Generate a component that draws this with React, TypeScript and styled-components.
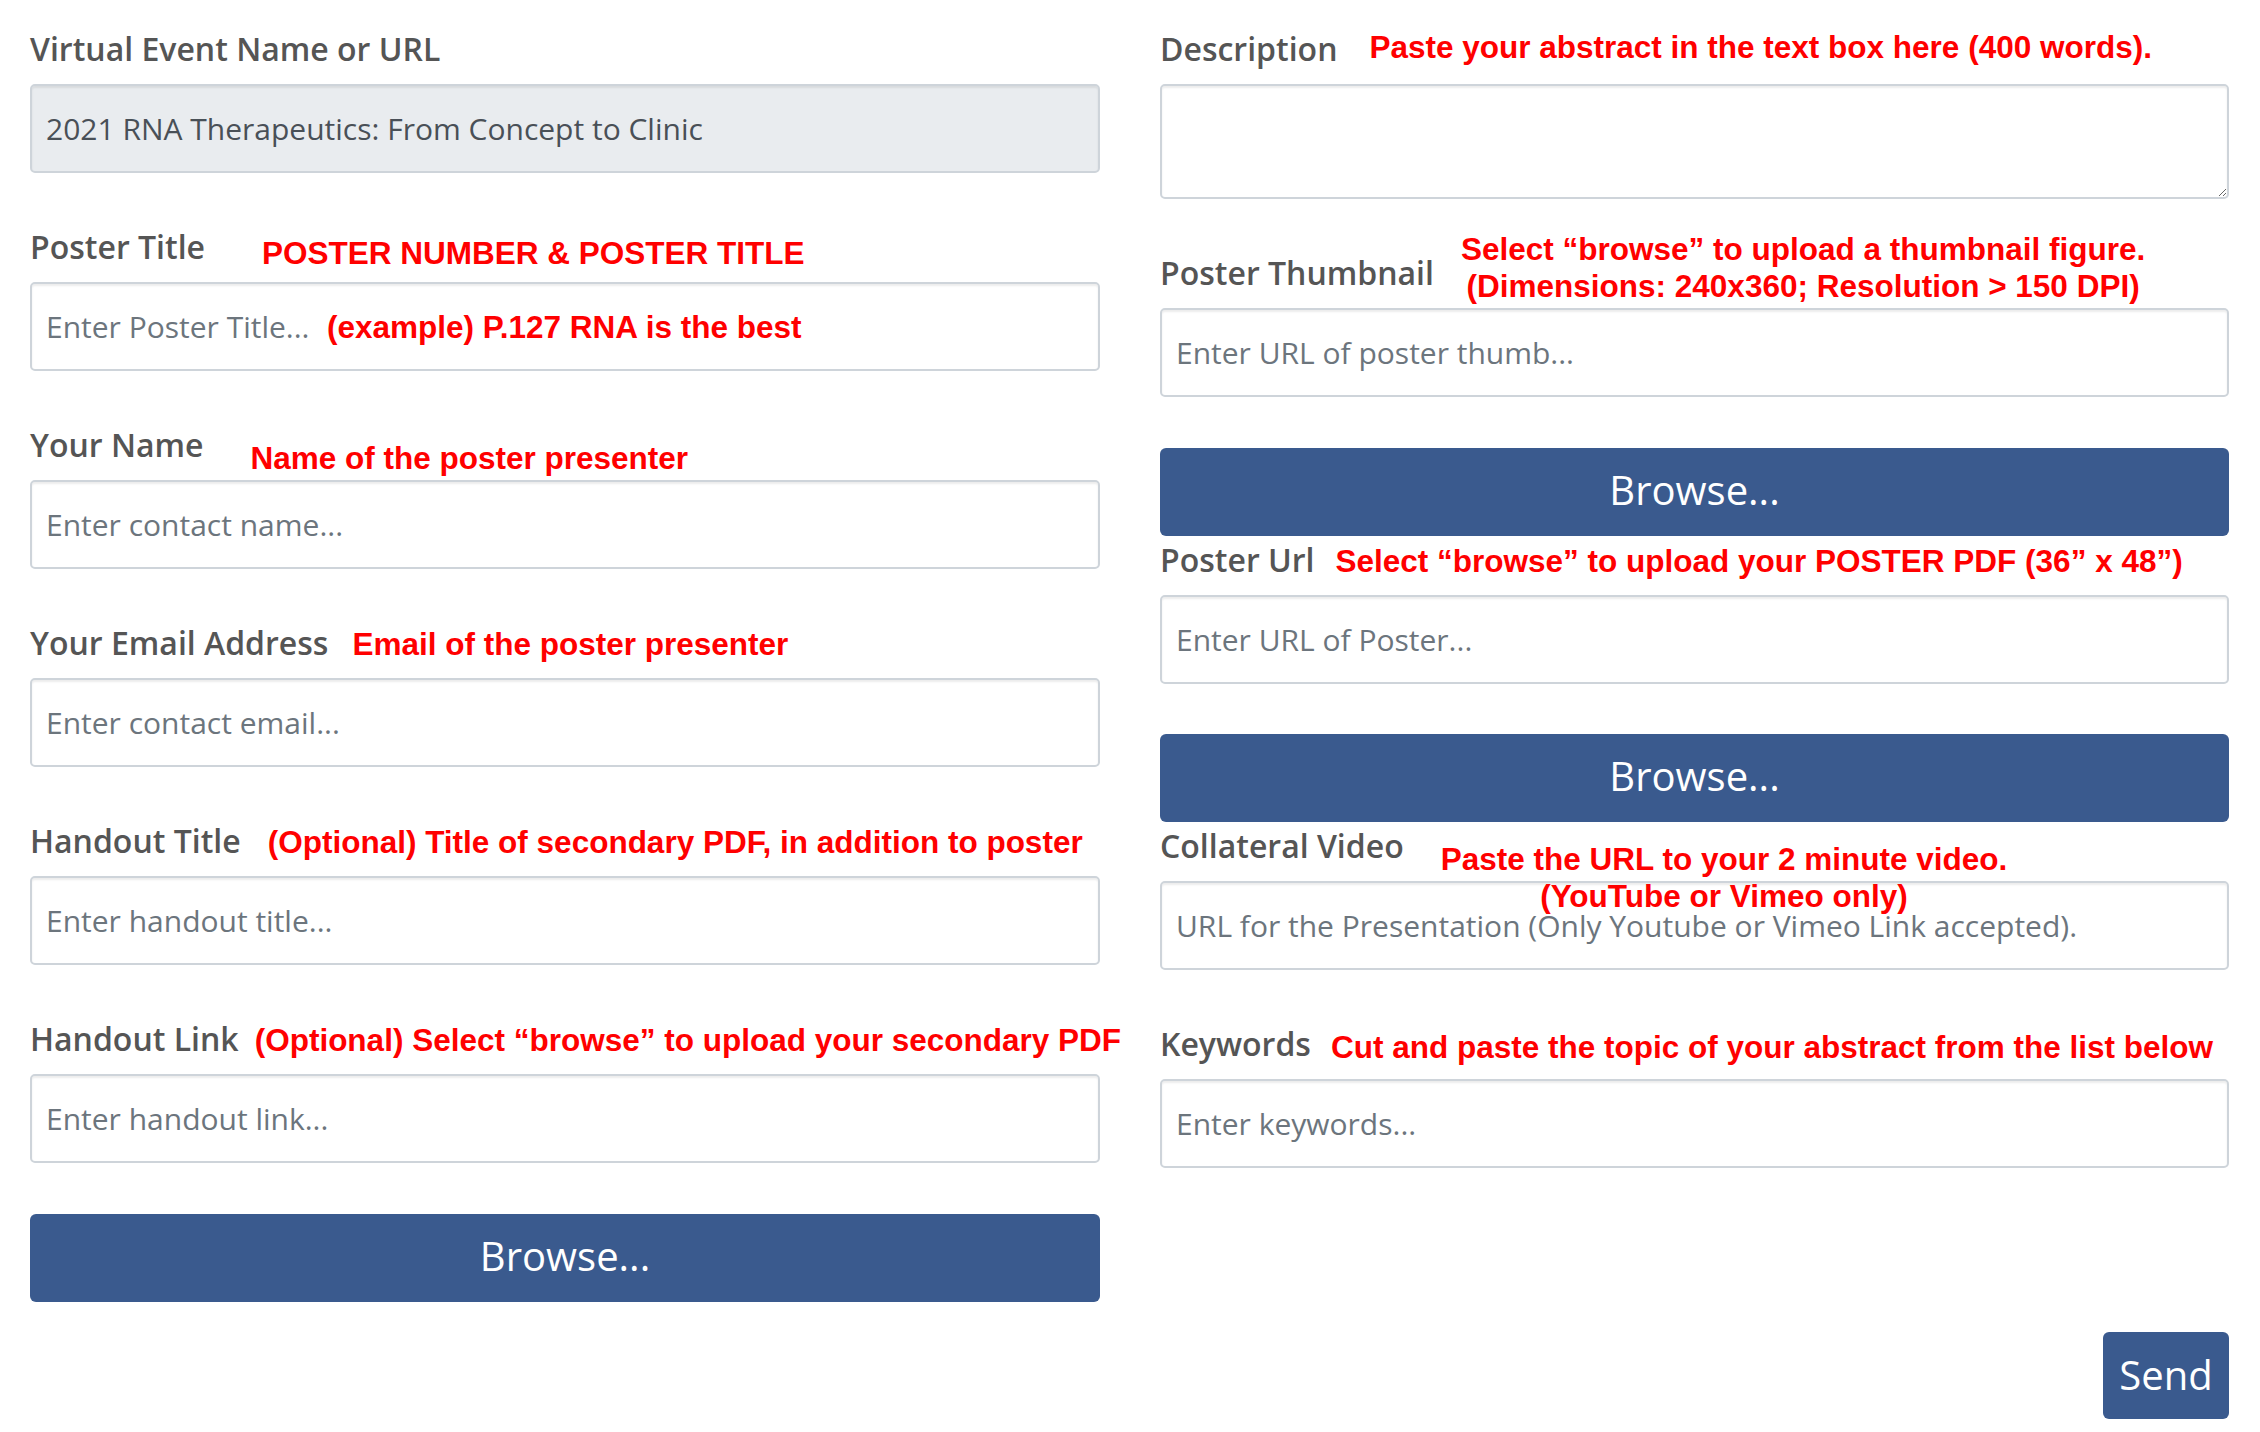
import React from 'react';
import styled, { createGlobalStyle } from 'styled-components';

const GlobalStyle = createGlobalStyle`
    html, body {
        margin: 0;
        padding: 0;
        background: #fff;
    }
    body {
        font-family: "Open Sans", "Liberation Sans", sans-serif;
        overflow: hidden;
    }
    * {
        box-sizing: border-box;
    }
`;

const Page = styled.div`
    display: grid;
    grid-template-columns: 1070px 1069px;
    column-gap: 60px;
    width: 2260px;
    padding: 25px 31px 0 30px;
`;

const Column = styled.div`
    display: flex;
    flex-direction: column;
`;

const Field = styled.div<{ $after?: number }>`
    display: flex;
    flex-direction: column;
    margin-bottom: ${({ $after }) => ($after ?? 50)}px;
`;

const LabelRow = styled.div`
    display: flex;
    align-items: baseline;
    height: 46px;
    margin-bottom: 13px;
    white-space: nowrap;
`;

const Label = styled.label`
    font-family: "Open Sans", sans-serif;
    font-weight: 600;
    font-size: 32px;
    line-height: 47px;
    color: #555;
`;

// red annotation text laid over the form
const Note = styled.span<{ $gap: number; $dy?: number; $center?: boolean }>`
    margin-left: ${({ $gap }) => $gap}px;
    font-family: "Liberation Sans", Arial, sans-serif;
    font-weight: 700;
    font-size: 31.5px;
    line-height: 37px;
    color: #ff0000;
    text-align: ${({ $center }) => ($center ? 'center' : 'left')};
    transform: translateY(${({ $dy }) => $dy ?? 0}px);
`;

const InputWrap = styled.div`
    position: relative;
`;

const InlineHint = styled.span`
    position: absolute;
    left: 297px;
    top: 50%;
    transform: translateY(-50%);
    font-family: "Liberation Sans", Arial, sans-serif;
    font-weight: 700;
    font-size: 31.5px;
    color: #ff0000;
    white-space: nowrap;
    pointer-events: none;
`;

const TextInput = styled.input`
    display: block;
    width: 100%;
    height: 89px;
    padding: 0 14px;
    border: 2px solid #ced4da;
    border-radius: 5px;
    box-shadow: inset 0 2px 2px rgba(0, 0, 0, 0.075);
    background: #fff;
    font-family: "Open Sans", sans-serif;
    font-size: 30px;
    color: #495057;
    outline: none;
    &::placeholder {
        color: #6c757d;
        opacity: 1;
    }
    &[readonly] {
        background: #e9ecef;
    }
`;

const TextArea = styled.textarea`
    display: block;
    width: 100%;
    height: 115px;
    padding: 12px 14px;
    border: 2px solid #ced4da;
    border-radius: 5px;
    box-shadow: inset 0 2px 2px rgba(0, 0, 0, 0.075);
    background: #fff;
    font-family: "Open Sans", sans-serif;
    font-size: 30px;
    color: #495057;
    outline: none;
`;

const BrowseButton = styled.button`
    display: block;
    width: 100%;
    height: 88px;
    padding: 0 0 5px;
    border: none;
    border-radius: 6px;
    background: #3a5a8e;
    color: #fff;
    font-family: "Open Sans", sans-serif;
    font-size: 40px;
    cursor: pointer;
`;

const SendButton = styled.button`
    align-self: flex-end;
    width: 126px;
    height: 87px;
    padding: 0 0 3px;
    border: none;
    border-radius: 6px;
    background: #3a5a8e;
    color: #fff;
    font-family: "Open Sans", sans-serif;
    font-size: 40px;
    cursor: pointer;
`;

export default function App() {
    return (
        <>
            <GlobalStyle />
            <Page>
                <Column>
                    <Field>
                        <LabelRow>
                            <Label>Virtual Event Name or URL</Label>
                        </LabelRow>
                        <TextInput readOnly value="2021 RNA Therapeutics: From Concept to Clinic" />
                    </Field>
                    <Field>
                        <LabelRow>
                            <Label>Poster Title</Label>
                            <Note $gap={57} $dy={5}>POSTER NUMBER &amp; POSTER TITLE</Note>
                        </LabelRow>
                        <InputWrap>
                            <TextInput placeholder="Enter Poster Title..." />
                            <InlineHint>(example) P.127 RNA is the best</InlineHint>
                        </InputWrap>
                    </Field>
                    <Field>
                        <LabelRow>
                            <Label>Your Name</Label>
                            <Note $gap={47} $dy={12}>Name of the poster presenter</Note>
                        </LabelRow>
                        <TextInput placeholder="Enter contact name..." />
                    </Field>
                    <Field>
                        <LabelRow>
                            <Label>Your Email Address</Label>
                            <Note $gap={24}>Email of the poster presenter</Note>
                        </LabelRow>
                        <TextInput placeholder="Enter contact email..." />
                    </Field>
                    <Field>
                        <LabelRow>
                            <Label>Handout Title</Label>
                            <Note $gap={27}>(Optional) Title of secondary PDF, in addition to poster</Note>
                        </LabelRow>
                        <TextInput placeholder="Enter handout title..." />
                    </Field>
                    <Field $after={51}>
                        <LabelRow>
                            <Label>Handout Link</Label>
                            <Note $gap={16}>(Optional) Select “browse” to upload your secondary PDF</Note>
                        </LabelRow>
                        <TextInput placeholder="Enter handout link..." />
                    </Field>
                    <BrowseButton>Browse...</BrowseButton>
                </Column>

                <Column>
                    <Field>
                        <LabelRow>
                            <Label>Description</Label>
                            <Note $gap={32} $dy={-3}>Paste your abstract in the text box here (400 words).</Note>
                        </LabelRow>
                        <TextArea />
                    </Field>
                    <Field $after={51}>
                        <LabelRow>
                            <Label>Poster Thumbnail</Label>
                            <Note $gap={27} $dy={-25} $center>
                                Select “browse” to upload a thumbnail figure.
                                <br />
                                (Dimensions: 240x360; Resolution &gt; 150 DPI)
                            </Note>
                        </LabelRow>
                        <TextInput placeholder="Enter URL of poster thumb..." />
                    </Field>
                    <BrowseButton>Browse...</BrowseButton>
                    <Field $after={50}>
                        <LabelRow>
                            <Label>Poster Url</Label>
                            <Note $gap={21}>Select “browse” to upload your POSTER PDF (36” x 48”)</Note>
                        </LabelRow>
                        <TextInput placeholder="Enter URL of Poster..." />
                    </Field>
                    <BrowseButton>Browse...</BrowseButton>
                    <Field>
                        <LabelRow>
                            <Label>Collateral Video</Label>
                            <Note $gap={37} $dy={12} $center>
                                Paste the URL to your 2 minute video.
                                <br />
                                (YouTube or Vimeo only)
                            </Note>
                        </LabelRow>
                        <TextInput placeholder="URL for the Presentation (Only Youtube or Vimeo Link accepted)." />
                    </Field>
                    <Field $after={164}>
                        <LabelRow>
                            <Label>Keywords</Label>
                            <Note $gap={20} $dy={2}>Cut and paste the topic of your abstract from the list below</Note>
                        </LabelRow>
                        <TextInput placeholder="Enter keywords..." />
                    </Field>
                    <SendButton>Send</SendButton>
                </Column>
            </Page>
        </>
    );
}
